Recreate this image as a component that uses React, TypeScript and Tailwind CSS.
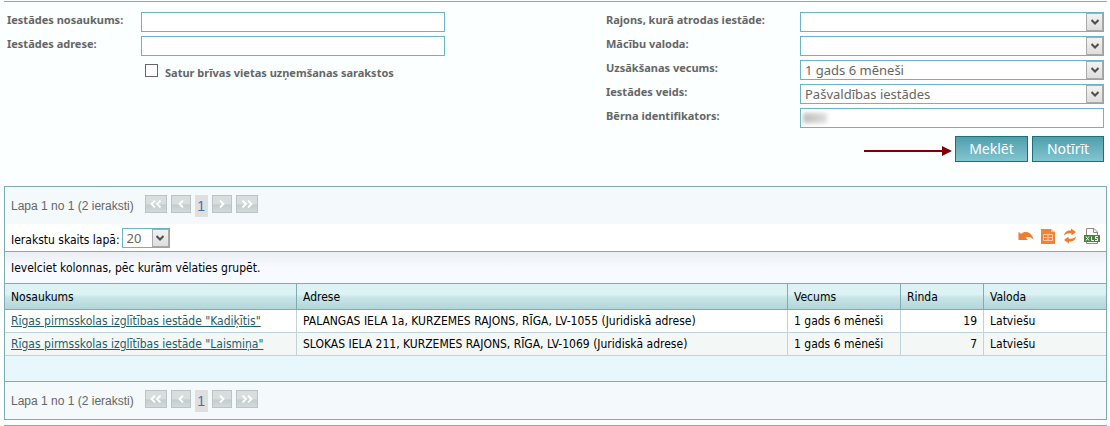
import React from 'react';

interface FieldProps {
  id: string;
  label: string;
  children: React.ReactNode;
}

const Field: React.FC<FieldProps> = ({ id, label, children }) => (
  <div className="flex h-5 items-center">
    <label
      htmlFor={id}
      className="w-[134px] shrink-0 pb-1 font-['Noto_Sans',sans-serif] text-[11px] leading-4 font-bold text-[#666] group-data-[wide=true]:w-[194px]"
    >
      {label}
    </label>
    {children}
  </div>
);

const TextBox: React.FC<{ id: string }> = ({ id }) => (
  <input id={id} type="text" className="h-5 w-full border border-[#6bb5c2] bg-white px-1 text-sm text-[#666] outline-none" />
);

interface DropDownProps {
  id: string;
  options: string[];
}

const DropDown: React.FC<DropDownProps> = ({ id, options }) => (
  <div className="relative h-5 w-full">
    <select
      id={id}
      className="block h-5 w-full appearance-none border border-[#6bb5c2] bg-white pr-5 pl-1 font-['Noto_Sans',sans-serif] text-[13px] leading-4 text-[#666] outline-none"
    >
      {options.map((option) => (
        <option key={option}>{option}</option>
      ))}
    </select>
    <span className="pointer-events-none absolute top-px right-px flex h-[18px] w-[17px] items-center justify-center border border-[#aaa] bg-linear-to-b from-[#f2f2f2] to-[#dedede]">
      <svg className="h-[6px] w-[8px]" viewBox="0 0 8 6" fill="none" stroke="#505050" strokeWidth="2">
        <path d="M0.5 1L4 4.5L7.5 1" />
      </svg>
    </span>
  </div>
);

const pagerButton =
  'flex h-[18px] items-center justify-center border border-[#bcc3c4] bg-linear-to-b from-[#d8dede] from-50% via-[#c3cdcd] via-55% to-[#d3dada]';

const Chevrons: React.FC<{ double?: boolean; right?: boolean }> = ({ double, right }) => (
  <svg
    className={right ? 'h-[8px] w-[12px] -scale-x-100' : 'h-[8px] w-[12px]'}
    viewBox="0 0 12 8"
    fill="none"
    stroke="#fff"
    strokeWidth="1.8"
  >
    {double ? <path d="M5 0.500L1.500 4L5 7.500M10.500 0.500L7 4L10.500 7.500" /> : <path d="M8 0.500L4.500 4L8 7.500" />}
  </svg>
);

const Pager: React.FC = () => (
  <nav className="flex h-[37px] items-center bg-[#f4f9fc] px-[6px] text-[#666]">
    <span className="mr-[11px] pt-px font-['Liberation_Sans',sans-serif] text-xs leading-4">Lapa 1 no 1 (2 ieraksti)</span>
    <div className="flex items-start gap-1 pt-px">
      <button type="button" aria-label="Pirmā lapa" className={`${pagerButton} w-[22px]`}>
        <Chevrons double />
      </button>
      <button type="button" aria-label="Iepriekšējā lapa" className={`${pagerButton} w-5`}>
        <Chevrons />
      </button>
      <span className="flex h-[22px] w-[13px] items-center justify-center bg-[#dfdfdf] font-['Liberation_Sans',sans-serif] text-sm text-[#3a74b0]">
        1
      </span>
      <button type="button" aria-label="Nākamā lapa" className={`${pagerButton} w-5`}>
        <Chevrons right />
      </button>
      <button type="button" aria-label="Pēdējā lapa" className={`${pagerButton} w-[22px]`}>
        <Chevrons double right />
      </button>
    </div>
  </nav>
);

const UndoIcon = () => (
  <svg className="h-4 w-4" viewBox="0 0 16 16">
    <path d="M0.500 12V3.500L3 6C7 2 14 4 15.500 11.500C13 8.500 10 8.500 7.500 9.500L10 12Z" fill="#f07c30" />
  </svg>
);

const SheetIcon = () => (
  <svg className="h-4 w-4" viewBox="0 0 16 16">
    <path d="M1 1H11L15 4V16H1Z" fill="#f58233" />
    <path d="M11 1V4H15Z" fill="#fbc49c" />
    <path d="M3.500 6.500H12.500V12.500H3.500ZM3.500 9.500H12.500M8 6.500V12.500" fill="none" stroke="#fcc9a5" />
  </svg>
);

const RefreshIcon = () => (
  <svg className="h-4 w-4" viewBox="0 0 16 16" fill="#f07c30">
    <path d="M2 7.500C2.500 3.500 6 2 9 2.500V0.500L14 4L9.500 7.500V5.500C6.500 5 4 5.500 2 7.500Z" />
    <path d="M14 8.500C13.500 12.500 10 14 7 13.500V15.500L2 12L6.500 8.500V10.500C9.500 11 12 10.500 14 8.500Z" />
  </svg>
);

const XlsIcon = () => (
  <svg className="h-4 w-4" viewBox="0 0 16 16">
    <path d="M2.500 0.500H10L13.500 4V15.500H2.500Z" fill="#fff" stroke="#8c8c8c" />
    <path d="M9.500 0.500V4.500H13.500" fill="none" stroke="#8c8c8c" />
    <path d="M0 7H16V14H0Z" fill="#45863a" />
    <path d="M2 8.500L5 12.500M5 8.500L2 12.500M7.500 8.500V12.500H10M14 8.500H11.500V10.500H13.500V12.500H11" fill="none" stroke="#fff" />
  </svg>
);

const tools = [
  { title: 'Atcelt', icon: <UndoIcon /> },
  { title: 'Kolonnas', icon: <SheetIcon /> },
  { title: 'Atjaunot', icon: <RefreshIcon /> },
  { title: 'Eksportēt XLS', icon: <XlsIcon /> },
];

const rows = [
  {
    name: 'Rīgas pirmsskolas izglītības iestāde "Kadiķītis"',
    address: 'PALANGAS IELA 1a, KURZEMES RAJONS, RĪGA, LV-1055 (Juridiskā adrese)',
    age: '1 gads 6 mēneši',
    queue: 19,
    language: 'Latviešu',
  },
  {
    name: 'Rīgas pirmsskolas izglītības iestāde "Laismiņa"',
    address: 'SLOKAS IELA 211, KURZEMES RAJONS, RĪGA, LV-1069 (Juridiskā adrese)',
    age: '1 gads 6 mēneši',
    queue: 7,
    language: 'Latviešu',
  },
];

const headCell = 'border-r border-b border-[#7eacb1] px-[6px] text-left font-normal last:border-r-0';
const bodyCell = 'border-r border-b border-[#bfd3da] px-[6px] whitespace-nowrap last:border-r-0';
const actionButton =
  "h-[26px] border border-[#1f6f7b] bg-linear-to-b from-[#4f9fac] to-[#83c5d0] font-['Noto_Sans',sans-serif] text-sm text-white";

const App: React.FC = () => (
  <div className="bg-[#fbffff] pt-px pr-[3px] pl-1 font-['DejaVu_Sans_Condensed','DejaVu_Sans',sans-serif] text-xs text-black">
    <form className="border-t border-[#6bb5c2] pt-[10px] pr-[3px] pl-[3px]" onSubmit={(e) => e.preventDefault()}>
      <div className="flex items-start justify-between">
        <div className="flex w-[438px] flex-col gap-1">
          <Field id="name" label="Iestādes nosaukums:">
            <TextBox id="name" />
          </Field>
          <Field id="address" label="Iestādes adrese:">
            <TextBox id="address" />
          </Field>
          <label className="flex items-center gap-[7px] pt-1 pl-[138px] font-['Noto_Sans',sans-serif] text-[11px] leading-4 font-bold text-[#666]">
            <input type="checkbox" className="mb-1 h-[13px] w-[13px] appearance-none border border-[#666] bg-white checked:bg-[#6bb5c2]" />
            Satur brīvas vietas uzņemšanas sarakstos
          </label>
        </div>
        <div className="group flex w-[498px] flex-col gap-1" data-wide="true">
          <Field id="district" label="Rajons, kurā atrodas iestāde:">
            <DropDown id="district" options={['']} />
          </Field>
          <Field id="language" label="Mācību valoda:">
            <DropDown id="language" options={['']} />
          </Field>
          <Field id="age" label="Uzsākšanas vecums:">
            <DropDown id="age" options={['1 gads 6 mēneši']} />
          </Field>
          <Field id="kind" label="Iestādes veids:">
            <DropDown id="kind" options={['Pašvaldības iestādes']} />
          </Field>
          <Field id="child" label="Bērna identifikators:">
            <div className="relative h-5 w-full">
              <TextBox id="child" />
              <span className="absolute top-[5px] left-[3px] h-[10px] w-6 bg-linear-to-r from-[#bdbdbd] to-[#dedede] blur-[2px]" />
            </div>
          </Field>
        </div>
      </div>
      <div className="flex items-center justify-end gap-1 pt-2">
        <svg className="mt-1 -mr-px h-[10px] w-[90px]" viewBox="0 0 90 10">
          <path d="M2 5H82" stroke="#800000" strokeWidth="2" />
          <path d="M80 0L90 5L80 10Z" fill="#800000" />
        </svg>
        <button type="submit" className={`${actionButton} w-[73px]`}>
          Meklēt
        </button>
        <button type="reset" className={`${actionButton} w-[72px]`}>
          Notīrīt
        </button>
      </div>
    </form>

    <section className="mt-6 border border-[#7eacb1]">
      <Pager />
      <div className="flex h-7 items-center justify-between border-b border-[#7eacb1] bg-white px-[6px]">
        <div className="flex items-center gap-[2px]">
          <label htmlFor="page-size" className="pt-1 whitespace-nowrap">
            Ierakstu skaits lapā:
          </label>
          <div className="w-12">
            <DropDown id="page-size" options={['20', '50', '100']} />
          </div>
        </div>
        <div className="flex gap-[6px] pb-1">
          {tools.map((tool) => (
            <button key={tool.title} type="button" aria-label={tool.title}>
              {tool.icon}
            </button>
          ))}
        </div>
      </div>
      <div className="flex h-8 items-center border-b border-[#7eacb1] bg-linear-to-b from-[#ebeff3] to-[#f7fbff] to-50% px-[6px]">
        Ievelciet kolonnas, pēc kurām vēlaties grupēt.
      </div>
      <table className="w-full table-fixed border-separate border-spacing-0">
        <colgroup>
          <col className="w-[292px]" />
          <col />
          <col className="w-[113px]" />
          <col className="w-[83px]" />
          <col className="w-[122px]" />
        </colgroup>
        <thead>
          <tr className="h-[26px] bg-linear-to-b from-[#dcf2f4] from-40% via-[#c9e6e9] via-50% to-[#b0d4d7]">
            <th className={headCell}>Nosaukums</th>
            <th className={headCell}>Adrese</th>
            <th className={headCell}>Vecums</th>
            <th className={headCell}>Rinda</th>
            <th className={headCell}>Valoda</th>
          </tr>
        </thead>
        <tbody>
          {rows.map((row) => (
            <tr key={row.name} className="h-[23px] bg-white even:bg-[#f3f8f7]">
              <td className={bodyCell}>
                <a href="#" className="text-[#1b616c] underline">
                  {row.name}
                </a>
              </td>
              <td className={bodyCell}>{row.address}</td>
              <td className={bodyCell}>{row.age}</td>
              <td className={`${bodyCell} text-right`}>{row.queue}</td>
              <td className={bodyCell}>{row.language}</td>
            </tr>
          ))}
        </tbody>
      </table>
      <div className="h-[26px] border-b border-[#7eacb1] bg-[#e8f7fc]" />
      <Pager />
    </section>
    <div className="mt-[5px] border-b border-[#6bb5c2]" />
  </div>
);

export default App;
